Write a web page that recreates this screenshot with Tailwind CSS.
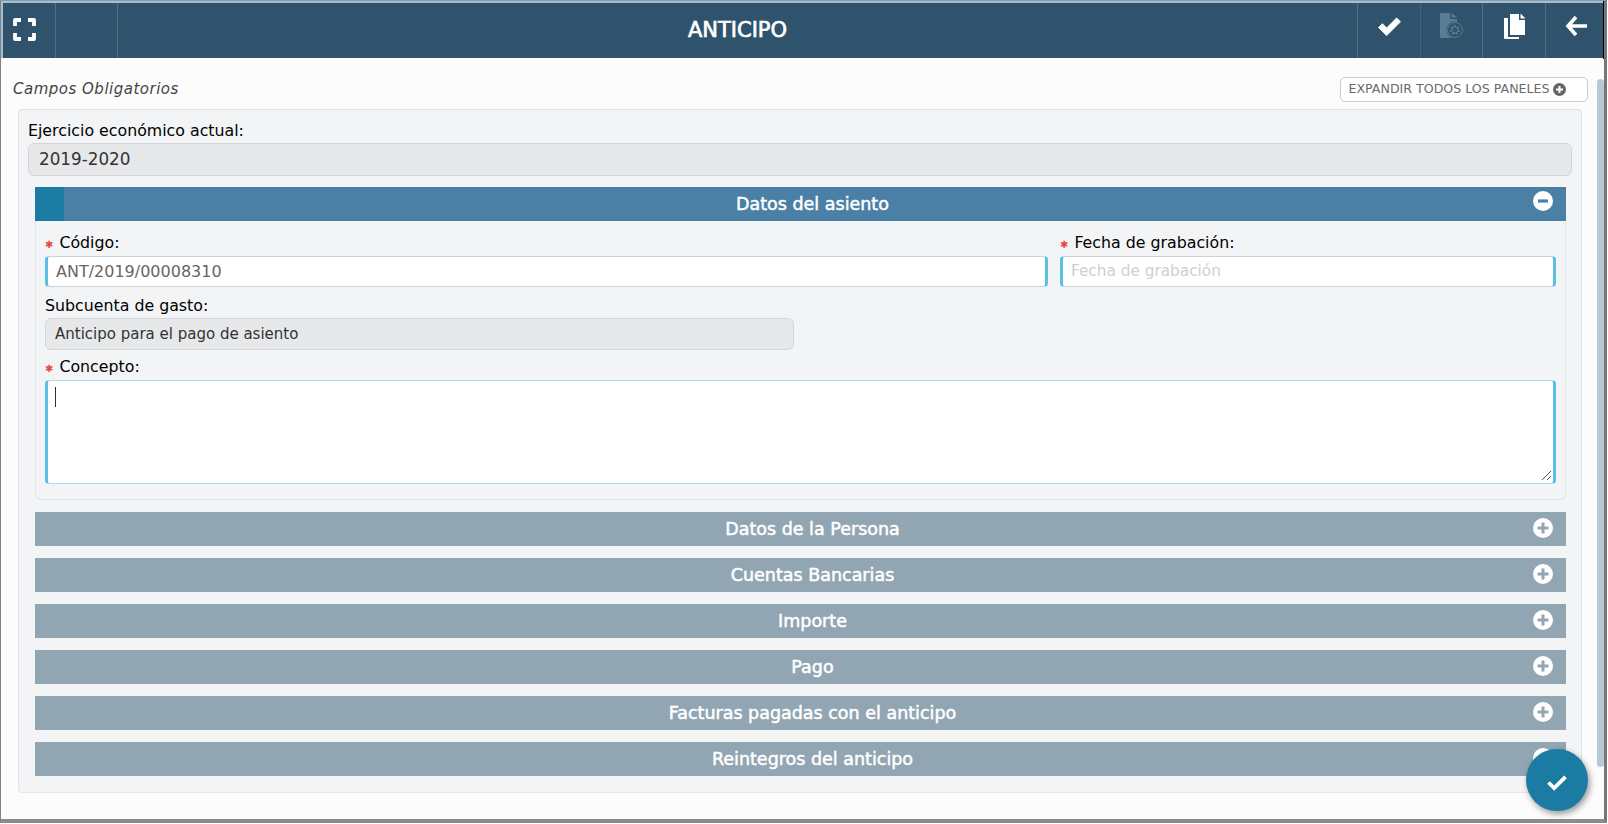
<!DOCTYPE html>
<html lang="es">
<head>
  <meta charset="UTF-8">
  <title>Anticipo</title>
  <script src="https://cdn.jsdelivr.net/npm/@tailwindcss/browser@4"></script>
</head>
<body class="bg-white overflow-hidden font-['DejaVu_Sans',sans-serif]">
  <div class="relative h-[823px] w-[1607px] border-l-[1px] border-t-[1px] border-r-[3px] border-b-[4px] border-l-[#808080] border-t-[#8f9aa3] border-r-[#777] border-b-[#8c8c8c] bg-[#fcfcfd] overflow-hidden">

    <!-- top bar -->
    <header class="flex h-[57px] items-center border-l-2 border-t-2 border-[#9fbfd6] bg-[#2f536d] text-white">
      <div class="flex h-full w-[53px] items-center justify-start border-r border-[#4d6f88] pb-[3px] pl-[10px]">
        <svg width="23" height="23" viewBox="0 0 23 23" fill="none" stroke="white" stroke-width="3.8" stroke-linejoin="round"><path d="M2 8V2h6M15 2h6v6M21 15v6h-6M8 21H2v-6"/></svg>
      </div>
      <div class="h-full w-[62px] border-r border-[#4d6f88]"></div>
      <h1 class="flex-1 pt-[1px] text-center text-[21px] [-webkit-text-stroke:0.7px_white]">ANTICIPO</h1>
      <div class="flex h-full w-[63px] items-center justify-center border-l border-[#4d6f88] pb-[6px]">
        <svg width="27" height="21" viewBox="0 0 26 22" fill="white" stroke="white" stroke-linejoin="round"><path d="M1.500 11l4-4 4.500 4.500L20.500 1l4 4L10 19.500z"/></svg>
      </div>
      <div class="flex h-full w-[62px] items-center justify-center border-l border-[#3f6480] pb-[10px]">
        <svg width="23" height="25" viewBox="0 0 23 25">
          <path d="M0 1a1 1 0 011-1h9v6h7v19H1a1 1 0 01-1-1z" fill="#5b7c95"/>
          <path d="M11.500 0l5.500 4.500h-5.500z" fill="#5b7c95"/>
          <circle cx="15" cy="17" r="8.500" fill="#2f536d"/>
          <circle cx="15" cy="17" r="7.500" fill="none" stroke="#5b7c95"/>
          <circle cx="15" cy="17" r="3.500" fill="none" stroke="#5b7c95" stroke-width="2.600" stroke-dasharray="2 1"/>
        </svg>
      </div>
      <div class="flex h-full w-[63px] items-center justify-center border-l border-[#4d6f88] pb-[9px]">
        <svg width="23" height="26" viewBox="0 0 23 26" fill="white"><path d="M7 1h9v6h6v15H7z"/><path d="M17.500 0.500l5 5h-5z"/><path d="M5 5v19h11v2H2a1 1 0 01-1-1V5z"/></svg>
      </div>
      <div class="flex h-full w-[59px] items-center justify-center border-l border-[#4d6f88] pb-[9px] pl-[2px]">
        <svg width="22" height="22" viewBox="0 0 22 22" fill="none" stroke="white" stroke-width="3.600"><path d="M11 2L3 11l8 9M3 11h19"/></svg>
      </div>
    </header>
    <div class="absolute right-0 top-0 h-[58px] w-[1px] bg-black"></div>

    <!-- main scroll area -->
    <main class="relative px-[17px]">
      <div class="flex h-[51px] items-start justify-between pt-[19px]">
        <span class="-ml-[5px] flex h-[25px] items-center text-[15px] italic tracking-[0.5px] text-[#444]">Campos Obligatorios</span>
        <button class="-mr-[1px] flex h-[25px] w-[248px] items-center justify-center gap-[3px] rounded-[5px] border border-[#c5ccd2] bg-white pr-[14px] text-[12.600px] text-[#6b6b6b]">EXPANDIR TODOS LOS PANELES
          <svg width="13" height="13" viewBox="0 0 13 13"><circle cx="6.500" cy="6.500" r="6.500" fill="#666"/><path d="M6.500 3v7M3 6.500h7" stroke="white" stroke-width="2"/></svg>
        </button>
      </div>

      <section class="h-[684px] w-[1564px] rounded-[4px] border border-[#e1e5ea] bg-[#f3f4f6] px-[9px]">
        <label class="block pt-[9px] text-[15.800px] leading-[24px] text-black">Ejercicio económico actual:</label>
        <div class="flex h-[33px] items-center rounded-[6px] border border-[#d3d6da] bg-[#e7e8ea] pl-[10px] text-[16.800px] text-[#333]">2019-2020</div>

        <div class="ml-[7px] mr-[6px] mt-[11px]">
          <!-- open panel -->
          <div class="relative flex h-[34px] items-center justify-center bg-[#4a80a6] pl-[24px] text-[17.500px] text-white [-webkit-text-stroke:0.5px_white]">
            <span class="absolute left-0 top-0 h-full w-[29px] bg-[#1b7ba3]"></span>
            Datos del asiento
            <svg class="absolute right-[13px] top-[4px]" width="20" height="20" viewBox="0 0 20 20"><circle cx="10" cy="10" r="10" fill="white"/><path d="M5 10h10" stroke="#4a80a6" stroke-width="3.200"/></svg>
          </div>
          <div class="h-[279px] rounded-b-[6px] border border-t-0 border-[#e1e5ea] px-[9px] pt-[9px]">
            <div class="flex gap-[12px]">
              <div class="w-[1003px]">
                <label class="flex h-[26px] items-center text-[15.800px] text-black"><span class="mr-[6px] mt-[3px] text-[10px] text-[#e8483f]">✱</span>Código:</label>
                <div class="flex h-[31px] items-center rounded-[4px] border border-[#c9d3dc] border-x-[3px] border-x-[#5bc0e3] bg-white pl-[8px] text-[16px] text-[#666]">ANT/2019/00008310</div>
              </div>
              <div class="w-[496px]">
                <label class="flex h-[26px] items-center text-[15.800px] text-black"><span class="mr-[6px] mt-[3px] text-[10px] text-[#e8483f]">✱</span>Fecha de grabación:</label>
                <div class="flex h-[31px] items-center rounded-[4px] border border-[#c9d3dc] border-x-[3px] border-x-[#5bc0e3] bg-white pl-[8px] text-[15.300px] text-[#cfcfcf]">Fecha de grabación</div>
              </div>
            </div>
            <label class="mt-[6px] flex h-[25px] items-center text-[15.800px] text-black">Subcuenta de gasto:</label>
            <div class="flex h-[32px] w-[749px] items-center rounded-[6px] border border-[#d3d6da] bg-[#e7e8ea] pl-[9px] text-[15px] text-[#333]">Anticipo para el pago de asiento</div>
            <label class="mt-[4px] flex h-[26px] items-center text-[15.800px] text-black"><span class="mr-[6px] mt-[3px] text-[10px] text-[#e8483f]">✱</span>Concepto:</label>
            <div class="relative h-[104px] rounded-[4px] border border-[#a9dcef] border-x-[3px] border-x-[#5bc0e3] bg-white">
              <span class="absolute left-[7px] top-[6px] h-[20px] w-px bg-[#333]"></span>
              <svg class="absolute bottom-[2px] right-[1px]" width="11" height="11" viewBox="0 0 11 11" stroke="#555" fill="none"><path d="M1 10l9-9M6 10l4-4"/></svg>
            </div>
          </div>

          <!-- collapsed panels -->
          <div class="relative mt-[12px] flex h-[34px] items-center justify-center bg-[#92a5b3] pl-[24px] text-[17.500px] text-white [-webkit-text-stroke:0.5px_white]">Datos de la Persona
            <svg class="absolute right-[13px] top-[6px]" width="20" height="20" viewBox="0 0 20 20"><circle cx="10" cy="10" r="10" fill="white"/><path d="M10 4.500v11M4.500 10h11" stroke="#92a5b3" stroke-width="3"/></svg>
          </div>
          <div class="relative mt-[12px] flex h-[34px] items-center justify-center bg-[#92a5b3] pl-[24px] text-[17.500px] text-white [-webkit-text-stroke:0.5px_white]">Cuentas Bancarias
            <svg class="absolute right-[13px] top-[6px]" width="20" height="20" viewBox="0 0 20 20"><circle cx="10" cy="10" r="10" fill="white"/><path d="M10 4.500v11M4.500 10h11" stroke="#92a5b3" stroke-width="3"/></svg>
          </div>
          <div class="relative mt-[12px] flex h-[34px] items-center justify-center bg-[#92a5b3] pl-[24px] text-[17.500px] text-white [-webkit-text-stroke:0.5px_white]">Importe
            <svg class="absolute right-[13px] top-[6px]" width="20" height="20" viewBox="0 0 20 20"><circle cx="10" cy="10" r="10" fill="white"/><path d="M10 4.500v11M4.500 10h11" stroke="#92a5b3" stroke-width="3"/></svg>
          </div>
          <div class="relative mt-[12px] flex h-[34px] items-center justify-center bg-[#92a5b3] pl-[24px] text-[17.500px] text-white [-webkit-text-stroke:0.5px_white]">Pago
            <svg class="absolute right-[13px] top-[6px]" width="20" height="20" viewBox="0 0 20 20"><circle cx="10" cy="10" r="10" fill="white"/><path d="M10 4.500v11M4.500 10h11" stroke="#92a5b3" stroke-width="3"/></svg>
          </div>
          <div class="relative mt-[12px] flex h-[34px] items-center justify-center bg-[#92a5b3] pl-[24px] text-[17.500px] text-white [-webkit-text-stroke:0.5px_white]">Facturas pagadas con el anticipo
            <svg class="absolute right-[13px] top-[6px]" width="20" height="20" viewBox="0 0 20 20"><circle cx="10" cy="10" r="10" fill="white"/><path d="M10 4.500v11M4.500 10h11" stroke="#92a5b3" stroke-width="3"/></svg>
          </div>
          <div class="relative mt-[12px] flex h-[34px] items-center justify-center bg-[#92a5b3] pl-[24px] text-[17.500px] text-white [-webkit-text-stroke:0.5px_white]">Reintegros del anticipo
            <svg class="absolute right-[13px] top-[6px]" width="20" height="20" viewBox="0 0 20 20"><circle cx="10" cy="10" r="10" fill="white"/><path d="M10 4.500v11M4.500 10h11" stroke="#92a5b3" stroke-width="3"/></svg>
          </div>
        </div>
      </section>
    </main>

    <!-- scrollbar thumb -->
    <div class="absolute right-0 top-[78px] h-[688px] w-[7px] rounded-[4px] bg-[#b9c9d3]"></div>

    <!-- floating action button -->
    <button class="absolute left-[1525px] top-[748px] flex h-[62px] w-[62px] items-center justify-center rounded-full bg-[#1b7ba3] pt-[4px] shadow-[2px_3px_6px_rgba(0,0,0,0.4)]">
      <svg width="22" height="17" viewBox="0 0 22 18" fill="none" stroke="white" stroke-width="4"><path d="M2 9l6 6L20 3"/></svg>
    </button>
  </div>
</body>
</html>
